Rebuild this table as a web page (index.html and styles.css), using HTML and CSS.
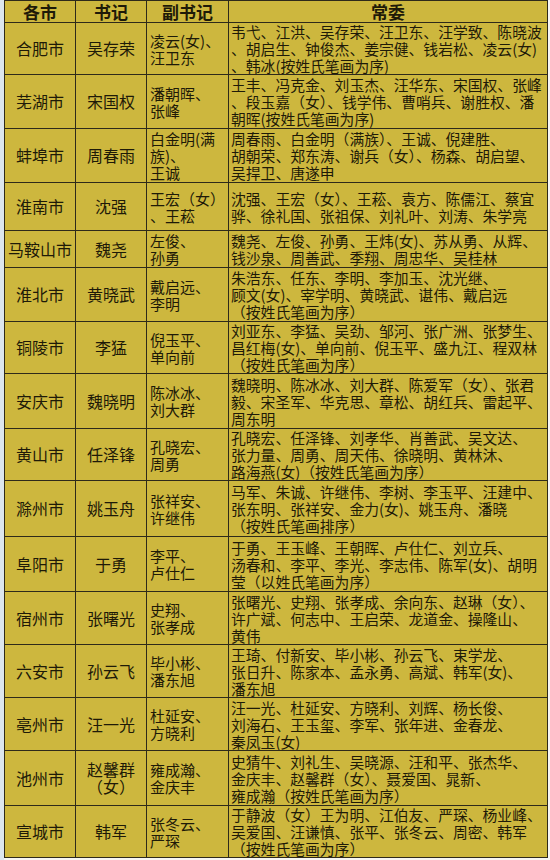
FILE: index.html
```html
<!DOCTYPE html>
<html lang="zh-CN">
<head>
<meta charset="utf-8">
<title>安徽各市委常委</title>
<link rel="stylesheet" href="styles.css">
</head>
<body>
<div class="page">
<table class="roster">
<colgroup><col class="c1"><col class="c2"><col class="c3"><col class="c4"></colgroup>
<thead>
<tr><th>各市</th><th>书记</th><th>副书记</th><th>常委</th></tr>
</thead>
<tbody>
<tr><td class="city">合肥市</td><td class="sec">吴存荣</td><td class="dep">凌云(女)、<br>汪卫东</td><td class="mem">韦弋、江洪、吴存荣、汪卫东、汪学致、陈晓波<br>、胡启生、钟俊杰、姜宗健、钱岩松、凌云(女)<br>、韩冰(按姓氏笔画为序)</td></tr>
<tr><td class="city">芜湖市</td><td class="sec">宋国权</td><td class="dep">潘朝晖、<br>张峰</td><td class="mem">王丰、冯克金、刘玉杰、汪华东、宋国权、张峰<br>、段玉嘉（女）、钱学伟、曹哨兵、谢胜权、潘<br>朝晖(按姓氏笔画为序)</td></tr>
<tr><td class="city">蚌埠市</td><td class="sec">周春雨</td><td class="dep">白金明(满<br>族)、<br>王诚</td><td class="mem">周春雨、白金明（满族）、王诚、倪建胜、<br>胡朝荣、郑东涛、谢兵（女）、杨森、胡启望、<br>吴捍卫、唐遂申</td></tr>
<tr><td class="city">淮南市</td><td class="sec">沈强</td><td class="dep">王宏（女）<br>、王菘</td><td class="mem">沈强、王宏（女）、王菘、袁方、陈儒江、蔡宜<br>骅、徐礼国、张祖保、刘礼叶、刘涛、朱学亮</td></tr>
<tr><td class="city">马鞍山市</td><td class="sec">魏尧</td><td class="dep">左俊、<br>孙勇</td><td class="mem">魏尧、左俊、孙勇、王炜(女)、苏从勇、从辉、<br>钱沙泉、周善武、季翔、周忠华、吴桂林</td></tr>
<tr><td class="city">淮北市</td><td class="sec">黄晓武</td><td class="dep">戴启远、<br>李明</td><td class="mem">朱浩东、任东、李明、李加玉、沈光继、<br>顾文(女)、宰学明、黄晓武、谌伟、戴启远<br>（按姓氏笔画为序）</td></tr>
<tr><td class="city">铜陵市</td><td class="sec">李猛</td><td class="dep">倪玉平、<br>单向前</td><td class="mem">刘亚东、李猛、吴劲、邹河、张广洲、张梦生、<br>昌红梅(女)、单向前、倪玉平、盛九江、程双林<br>（按姓氏笔画为序）</td></tr>
<tr><td class="city">安庆市</td><td class="sec">魏晓明</td><td class="dep">陈冰冰、<br>刘大群</td><td class="mem">魏晓明、陈冰冰、刘大群、陈爱军（女）、张君<br>毅、宋圣军、华克思、章松、胡红兵、雷起平、<br>周东明</td></tr>
<tr><td class="city">黄山市</td><td class="sec">任泽锋</td><td class="dep">孔晓宏、<br>周勇</td><td class="mem">孔晓宏、任泽锋、刘孝华、肖善武、吴文达、<br>张力量、周勇、周天伟、徐晓明、黄林沐、<br>路海燕(女)（按姓氏笔画为序）</td></tr>
<tr><td class="city">滁州市</td><td class="sec">姚玉舟</td><td class="dep">张祥安、<br>许继伟</td><td class="mem">马军、朱诚、许继伟、李树、李玉平、汪建中、<br>张东明、张祥安、金力(女)、姚玉舟、潘晓<br>（按姓氏笔画排序）</td></tr>
<tr><td class="city">阜阳市</td><td class="sec">于勇</td><td class="dep">李平、<br>卢仕仁</td><td class="mem">于勇、王玉峰、王朝晖、卢仕仁、刘立兵、<br>汤春和、李平、李光、李志伟、陈军(女)、胡明<br>莹（以姓氏笔画为序）</td></tr>
<tr><td class="city">宿州市</td><td class="sec">张曙光</td><td class="dep">史翔、<br>张孝成</td><td class="mem">张曙光、史翔、张孝成、余向东、赵琳（女）、<br>许广斌、何志中、王启荣、龙道金、操隆山、<br>黄伟</td></tr>
<tr><td class="city">六安市</td><td class="sec">孙云飞</td><td class="dep">毕小彬、<br>潘东旭</td><td class="mem">王琦、付新安、毕小彬、孙云飞、束学龙、<br>张日升、陈家本、孟永勇、高斌、韩军(女)、<br>潘东旭</td></tr>
<tr><td class="city">亳州市</td><td class="sec">汪一光</td><td class="dep">杜延安、<br>方晓利</td><td class="mem">汪一光、杜延安、方晓利、刘辉、杨长俊、<br>刘海石、王玉玺、李军、张年进、金春龙、<br>秦凤玉(女)</td></tr>
<tr><td class="city">池州市</td><td class="sec">赵馨群<br>（女）</td><td class="dep">雍成瀚、<br>金庆丰</td><td class="mem">史猜牛、刘礼生、吴晓源、汪和平、张杰华、<br>金庆丰、赵馨群（女）、聂爱国、晁新、<br>雍成瀚（按姓氏笔画为序）</td></tr>
<tr><td class="city">宣城市</td><td class="sec">韩军</td><td class="dep">张冬云、<br>严琛</td><td class="mem">于静波（女）王为明、江伯友、严琛、杨业峰、<br>吴爱国、汪谦慎、张平、张冬云、周密、韩军<br>（按姓氏笔画为序）</td></tr>
</tbody>
</table>
</div>
</body>
</html>
```
FILE: styles.css
```css
html, body {
  margin: 0;
  padding: 0;
  background: #f4f4f2;
}
.page {
  width: 550px;
  height: 860px;
  box-sizing: border-box;
  padding-left: 4px;
  background: linear-gradient(to right, #dce6ee 0, #dce6ee 4px, #f6f6f4 4px);
  font-family: "Noto Sans CJK SC", "Noto Sans", sans-serif;
  color: #1e1a08;
}
.roster {
  border-collapse: collapse;
  table-layout: fixed;
  width: 543px;
  background: #cdb73e;
}
.c1 { width: 71px; }
.c2 { width: 71px; }
.c3 { width: 82px; }
.c4 { width: 319px; }
.roster th, .roster td {
  border: 1.5px solid #2e2a1a;
  padding: 0;
  white-space: nowrap;
  line-height: 17px;
}
.roster td {
  overflow: hidden;
}
.roster th {
  height: 21px;
  font-size: 17px;
  font-weight: 700;
  text-align: center;
  vertical-align: middle;
  line-height: 20px;
}
.city, .sec {
  font-size: 16px;
  text-align: center;
  vertical-align: middle;
}
.dep {
  font-size: 15px;
  text-align: left;
  padding-left: 3px !important;
  vertical-align: middle;
}
.mem {
  font-size: 14.8px;
  text-align: left;
  padding-left: 2px !important;
  vertical-align: middle;
}
.roster tbody tr:nth-child(1) td { height: 50px; }
.roster tbody tr:nth-child(2) td { height: 53px; }
.roster tbody tr:nth-child(3) td { height: 53px; }
.roster tbody tr:nth-child(4) td { height: 47px; }
.roster tbody tr:nth-child(5) td { height: 36px; }
.roster tbody tr:nth-child(6) td { height: 53px; }
.roster tbody tr:nth-child(7) td { height: 50px; }
.roster tbody tr:nth-child(8) td { height: 54px; }
.roster tbody tr:nth-child(9) td { height: 49px; }
.roster tbody tr:nth-child(10) td { height: 55px; }
.roster tbody tr:nth-child(11) td { height: 54px; }
.roster tbody tr:nth-child(12) td { height: 52px; }
.roster tbody tr:nth-child(13) td { height: 52px; }
.roster tbody tr:nth-child(14) td { height: 52px; }
.roster tbody tr:nth-child(15) td { height: 54px; }
.roster tbody tr:nth-child(16) td { height: 50px; }
```
